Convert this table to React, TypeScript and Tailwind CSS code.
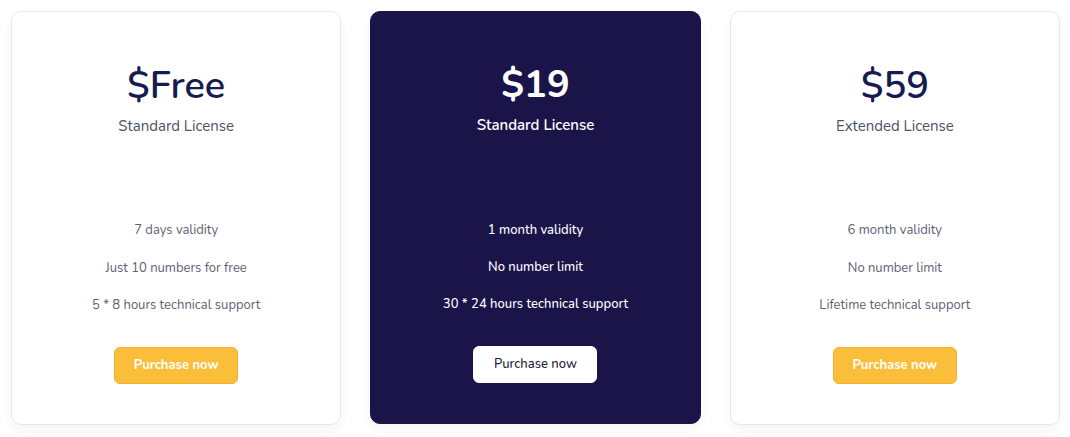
type Plan = {
  price: string;
  license: string;
  features: string[];
  featured?: boolean;
};

const plans: Plan[] = [
  {
    price: "$Free",
    license: "Standard License",
    features: ["7 days validity", "Just 10 numbers for free", "5 * 8 hours technical support"],
  },
  {
    price: "$19",
    license: "Standard License",
    features: ["1 month validity", "No number limit", "30 * 24 hours technical support"],
    featured: true,
  },
  {
    price: "$59",
    license: "Extended License",
    features: ["6 month validity", "No number limit", "Lifetime technical support"],
  },
];

function PlanCard({ plan }: { plan: Plan }) {
  const dark = plan.featured === true;
  return (
    <div
      className={
        dark
          ? "flex h-[413px] flex-col items-center rounded-[10px] border border-[#1a1449] bg-[#1a1449] pt-[50px] shadow-[0_6px_12px_rgba(0,0,0,0.04)]"
          : "flex h-[414px] flex-col items-center rounded-[10px] border border-[#e6e8ec] bg-white pt-[51px] shadow-[0_6px_12px_rgba(0,0,0,0.04)]"
      }
    >
      <h2
        className={
          dark
            ? "text-[38px] font-bold leading-[46px] text-white"
            : "text-[38px] font-semibold leading-[46px] text-[#161c4f]"
        }
      >
        {plan.price}
      </h2>
      <p
        className={
          dark
            ? "mt-[6px] text-[15px] font-semibold leading-[22px] text-white"
            : "mt-[6px] text-[15px] leading-[22px] text-[#4a5366]"
        }
      >
        {plan.license}
      </p>
      <ul
        className={
          dark
            ? "mt-[84px] flex flex-col items-center gap-[17px]"
            : "mt-[83px] flex flex-col items-center gap-[17.5px]"
        }
      >
        {plan.features.map((feature) => (
          <li
            key={feature}
            className={
              dark
                ? "text-[13px] font-medium leading-[20px] text-white"
                : "text-[13px] leading-[20px] text-[#5b6275]"
            }
          >
            {feature}
          </li>
        ))}
      </ul>
      <button
        type="button"
        className={
          dark
            ? "mt-[32px] h-[37px] w-[124px] rounded-[6px] border border-white bg-white text-[13px] font-medium text-[#1c2333]"
            : "mt-[32px] h-[37px] w-[124px] rounded-[6px] border border-[#f0b02e] bg-[#fbbe3b] text-[13px] font-bold text-white"
        }
      >
        Purchase now
      </button>
    </div>
  );
}

export default function App() {
  return (
    <div className="min-h-[437px] w-[1070px] bg-white font-['Nunito','Lato',sans-serif]">
      <div className="grid grid-cols-3 gap-[29px] pl-[11px] pr-[10px] pt-[11px]">
        {plans.map((plan) => (
          <PlanCard key={plan.price} plan={plan} />
        ))}
      </div>
    </div>
  );
}
